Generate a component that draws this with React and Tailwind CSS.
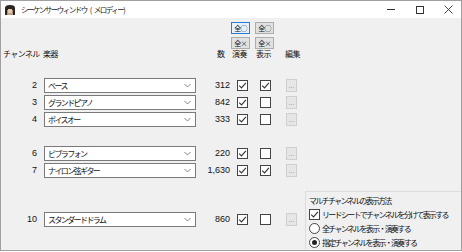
import React from 'react';

const jp = { fontFamily: '"Noto Sans CJK JP", "Liberation Sans", sans-serif' };
const num = { fontFamily: '"Liberation Sans", "Noto Sans CJK JP", sans-serif' };

const rows = [
    { ch: 2, name: 'ベース', count: '312', play: true, show: true },
    { ch: 3, name: 'グランドピアノ', count: '842', play: true, show: false },
    { ch: 4, name: 'ボイスオー', count: '333', play: true, show: false },
    { gap: 17 },
    { ch: 6, name: 'ビブラフォン', count: '220', play: true, show: false },
    { ch: 7, name: 'ナイロン弦ギター', count: '1,630', play: true, show: true },
    { gap: 32 },
    { ch: 10, name: 'スタンダードドラム', count: '860', play: true, show: false },
];

function Check({ on }) {
    return (
        <div className="w-[11px] h-[11px] shrink-0 border border-[#444] bg-white flex items-center justify-center">
            {on && (
                <svg width="9" height="9" viewBox="0 0 9 9">
                    <path d="M1.2 4.6 L3.5 6.9 L7.9 1.8" fill="none" stroke="#333" strokeWidth="1.1" />
                </svg>
            )}
        </div>
    );
}

function Radio({ on }) {
    return (
        <div className="w-[11px] h-[11px] shrink-0 rounded-full border border-[#444] bg-white flex items-center justify-center">
            {on && <div className="w-[5px] h-[5px] rounded-full bg-[#222]" />}
        </div>
    );
}

function Combo({ text }) {
    return (
        <div className="w-[152px] h-[15px] border border-[#7a7a7a] bg-white flex items-center justify-between pl-[3px] pr-[4px]">
            <span className="text-[8px] tracking-[-1.6px] leading-none text-[#111] whitespace-nowrap">{text}</span>
            <svg width="7" height="5" viewBox="0 0 7 5">
                <path d="M0.5 1 L3.5 4 L6.5 1" fill="none" stroke="#777" strokeWidth="0.9" />
            </svg>
        </div>
    );
}

function EditBtn() {
    return (
        <div className="w-[11px] h-[13px] border border-[#cfcfcf] bg-[#e6e6e6] flex items-end justify-center pb-[2px]">
            <span className="text-[7px] leading-none text-[#8a8a8a]" style={num}>...</span>
        </div>
    );
}

function AllBtn({ label, focus }) {
    return (
        <div className={`w-[19px] h-[12px] border ${focus ? 'border-[#2a7bd4] bg-[#e5f1fb]' : 'border-[#adadad] bg-[#e1e1e1]'} flex items-center justify-center text-[7px] tracking-[-0.8px] leading-none text-[#222] whitespace-nowrap`}>
            {label}
        </div>
    );
}

function Row({ r }) {
    if (r.gap) return <div style={{ height: r.gap }} />;
    return (
        <div className="h-[17px] flex items-center">
            <div className="w-[37px] text-right pr-[1px] text-[9px] leading-none" style={num}>{r.ch}</div>
            <div className="ml-[6px]"><Combo text={r.name} /></div>
            <div className="w-[34px] text-right text-[9px] leading-none" style={num}>{r.count}</div>
            <div className="w-[18px] flex justify-end"><Check on={r.play} /></div>
            <div className="w-[23px] flex justify-end"><Check on={r.show} /></div>
            <div className="w-[26px] flex justify-end"><EditBtn /></div>
        </div>
    );
}

export default function App() {
    return (
        <div className="w-[462px] h-[251px] border border-[#a0a0a0] bg-[#f0f0f0] flex flex-col text-[#111]" style={jp}>
            <div className="h-[17px] bg-white flex items-center shrink-0">
                <svg width="12" height="12" viewBox="0 0 12 12" className="ml-[3px]">
                    <path d="M1 11 L1 4 Q1 1 6 1 Q11 1 11 4 L11 11 L8.5 11 L8.5 6 L3.5 6 L3.5 11 Z" fill="#2b2420" />
                    <rect x="4" y="5" width="4" height="4" fill="#e8c9a8" />
                    <rect x="3.5" y="9" width="5" height="2" fill="#c9a078" />
                </svg>
                <div className="ml-[5px] flex items-center gap-[3px] text-[7.5px] tracking-[-1.5px] leading-none text-[#222] whitespace-nowrap">
                    <span>シーケンサーウィンドウ</span>
                    <span>(</span>
                    <span>メロディー)</span>
                </div>
                <div className="ml-auto flex items-center h-full">
                    <div className="w-[29px] flex justify-center">
                        <div className="w-[8px] h-px bg-[#333]" />
                    </div>
                    <div className="w-[30px] flex justify-center">
                        <div className="w-[8px] h-[8px] border border-[#333]" />
                    </div>
                    <div className="w-[26px] flex justify-center">
                        <svg width="9" height="9" viewBox="0 0 9 9">
                            <path d="M0.5 0.5 L8.5 8.5 M8.5 0.5 L0.5 8.5" stroke="#333" strokeWidth="0.9" />
                        </svg>
                    </div>
                </div>
            </div>
            <div className="flex flex-1">
                <div className="w-[304px] flex flex-col">
                    <div className="flex pt-[4px] ml-[230px] gap-[5px]">
                        <div className="flex flex-col gap-[3px]">
                            <AllBtn label="全○" focus />
                            <AllBtn label="全×" />
                        </div>
                        <div className="flex flex-col gap-[3px]">
                            <AllBtn label="全○" />
                            <AllBtn label="全×" />
                        </div>
                    </div>
                    <div className="flex items-center h-[12px] text-[8px] tracking-[-0.6px] leading-none mt-[-1px] whitespace-nowrap">
                        <div className="w-[42px] pl-[2px]">チャンネル</div>
                        <div className="w-[174px]">楽器</div>
                        <div className="w-[15px]">数</div>
                        <div className="w-[24px]">演奏</div>
                        <div className="w-[29px]">表示</div>
                        <div>編集</div>
                    </div>
                    <div className="flex flex-col mt-[17px]">
                        {rows.map((r, i) => <Row key={i} r={r} />)}
                    </div>
                </div>
                <div className="flex-1 flex flex-col justify-end pb-px">
                    <div className="border-t border-l border-[#dcdcdc] h-[58px] flex flex-col pl-[3px] pt-[3px] gap-[3px] text-[8px] tracking-[-1.7px] leading-none whitespace-nowrap">
                        <div className="h-[11px] flex items-center">マルチチャンネルの表示方法</div>
                        <div className="h-[11px] flex items-center gap-[2px]"><Check on /><span>リードシートでチャンネルを分けて表示する</span></div>
                        <div className="h-[11px] flex items-center gap-[2px]"><Radio /><span>全チャンネルを表示・演奏する</span></div>
                        <div className="h-[11px] flex items-center gap-[2px]"><Radio on /><span>指定チャンネルを表示・演奏する</span></div>
                    </div>
                </div>
            </div>
        </div>
    );
}
